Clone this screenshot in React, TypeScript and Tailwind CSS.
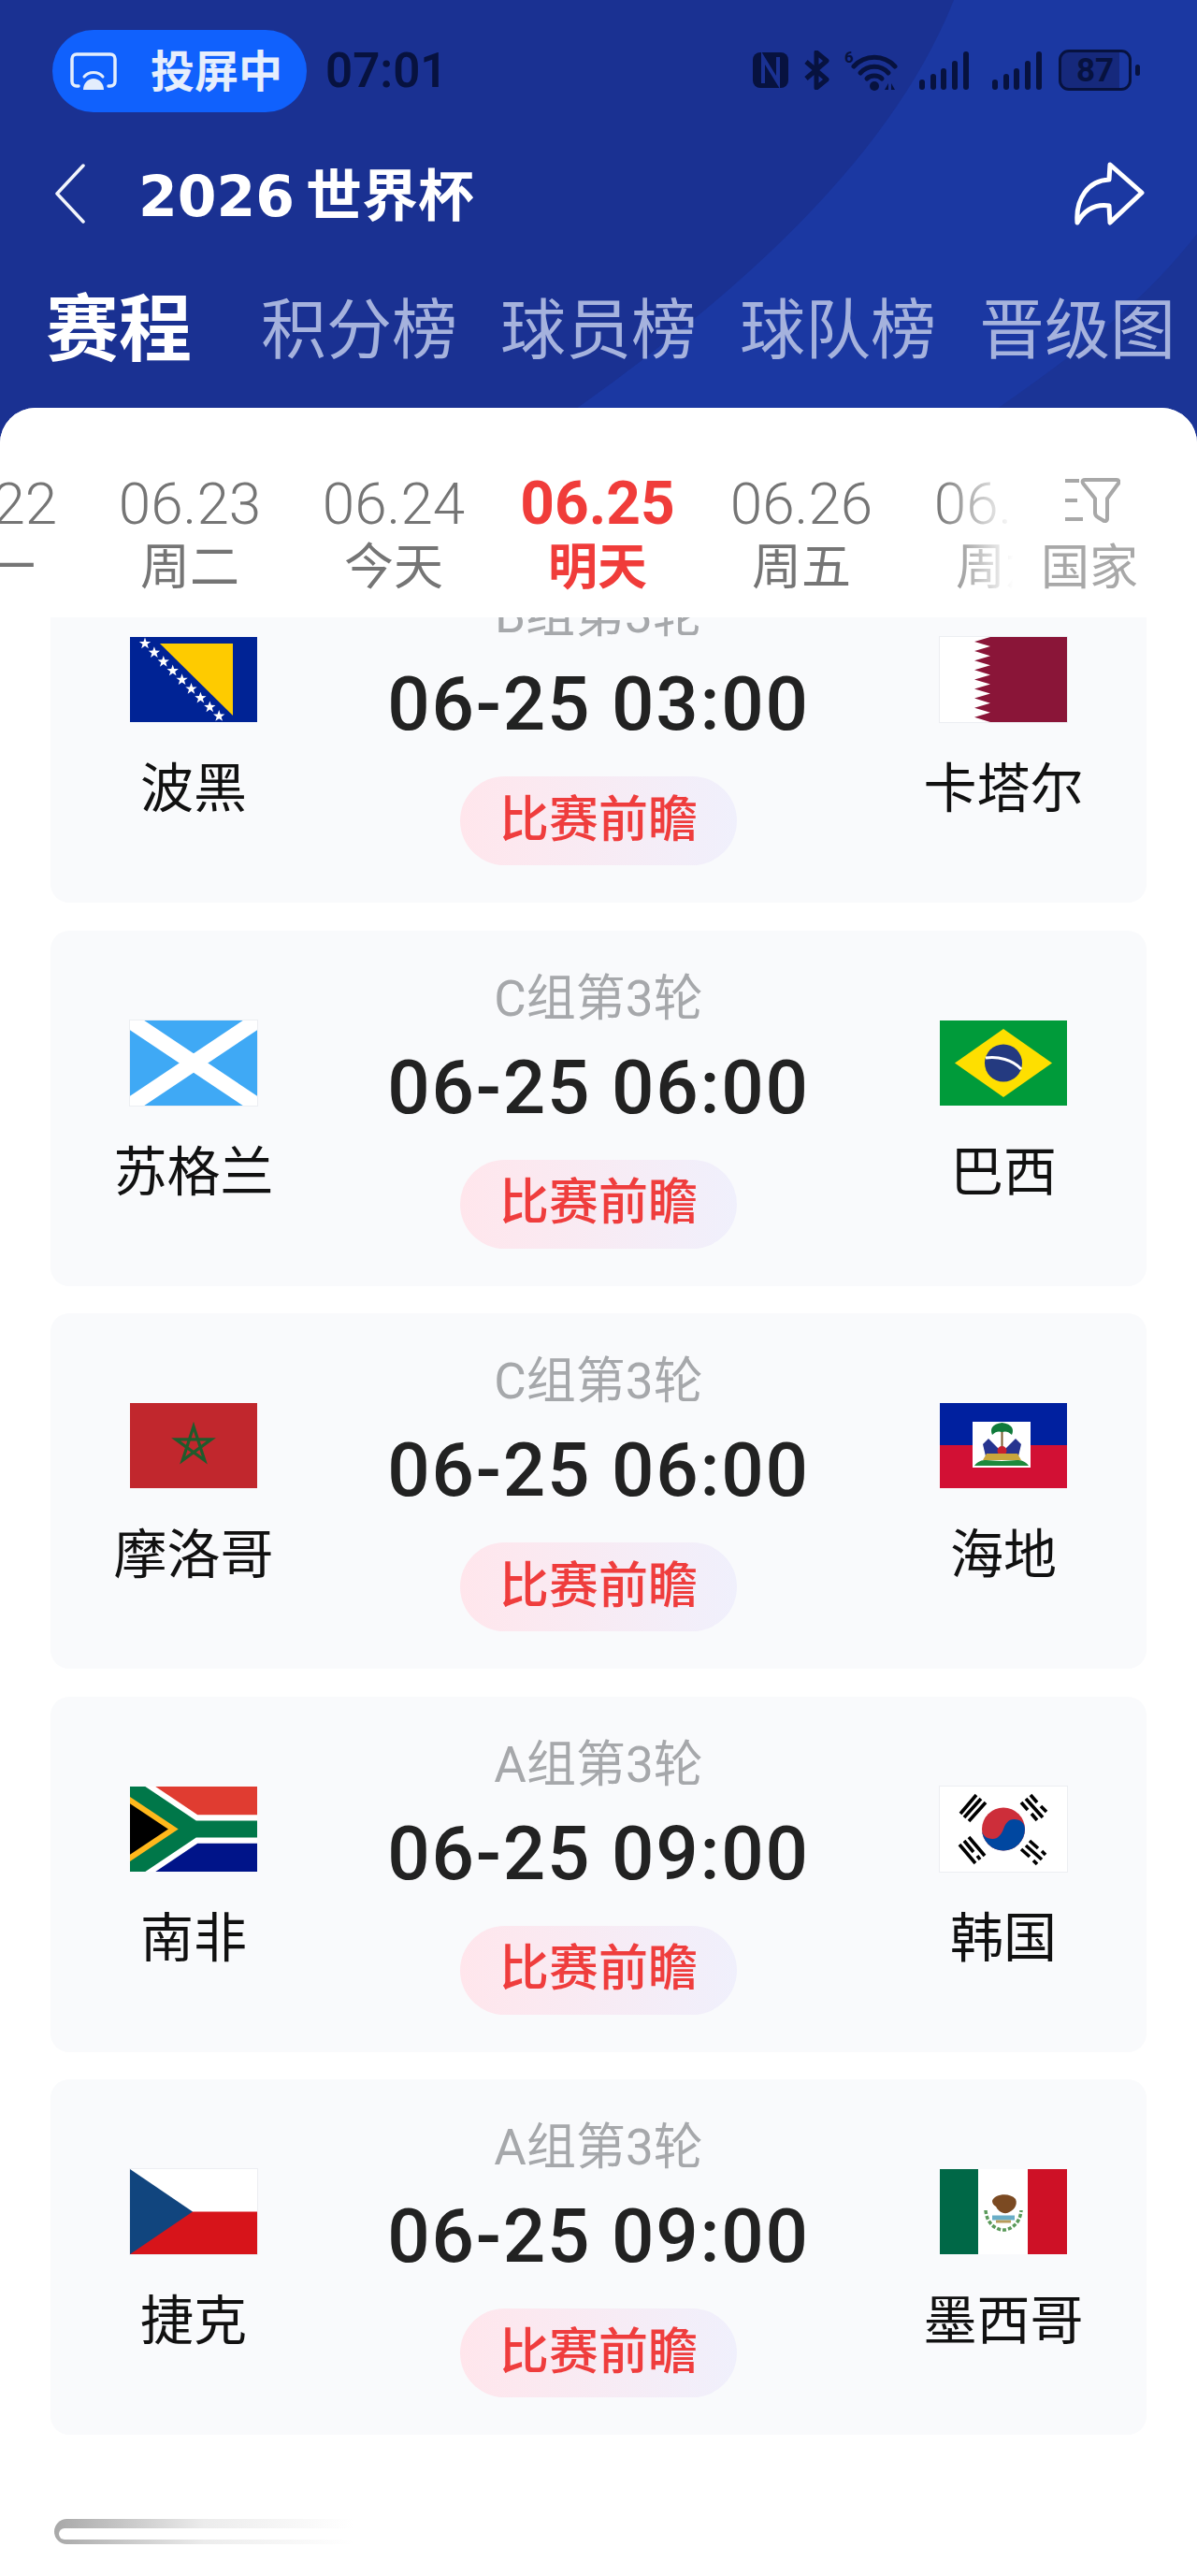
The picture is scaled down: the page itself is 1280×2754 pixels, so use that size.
import type { ReactNode } from "react";

interface Match {
  group: string;
  time: string;
  home: string;
  away: string;
  homeFlag: ReactNode;
  awayFlag: ReactNode;
}

const dates = [
  { date: "06.22", day: "周一" },
  { date: "06.23", day: "周二" },
  { date: "06.24", day: "今天" },
  { date: "06.25", day: "明天", active: true },
  { date: "06.26", day: "周五" },
  { date: "06.27", day: "周六" },
];

const tabs = ["积分榜", "球员榜", "球队榜", "晋级图"];

function starPoints(cx: number, cy: number, r: number) {
  const pts: string[] = [];
  for (let i = 0; i < 10; i++) {
    const radius = i % 2 === 0 ? r : r * 0.4;
    const a = -Math.PI / 2 + (i * Math.PI) / 5;
    pts.push(`${cx + radius * Math.cos(a)},${cy + radius * Math.sin(a)}`);
  }
  return pts.join(" ");
}

function Flag({ children, border = false }: { children: ReactNode; border?: boolean }) {
  return (
    <svg
      width="136"
      height="91"
      viewBox="0 0 136 91"
      className={border ? "block outline outline-1 outline-[#eceef2]" : "block"}
    >
      {children}
    </svg>
  );
}

function Bosnia() {
  return (
    <Flag>
      <rect width="136" height="91" fill="#002395" />
      <path d="M32 7H110V84Z" fill="#fecb00" />
      {Array.from({ length: 9 }).map((_, i) => (
        <polygon key={i} points={starPoints(16 + i * 9.9, 7 + i * 9.7, 6.5)} fill="#fff" />
      ))}
    </Flag>
  );
}

function Qatar() {
  const teeth: string[] = [];
  for (let i = 0; i < 9; i++) {
    teeth.push(`54,${i * 10.1}`, `37,${i * 10.1 + 5}`);
  }
  return (
    <Flag border>
      <rect width="136" height="91" fill="#fff" />
      <polygon points={`136,0 ${teeth.join(" ")} 54,91 136,91`} fill="#8a1538" />
    </Flag>
  );
}

function Scotland() {
  return (
    <Flag border>
      <rect width="136" height="91" fill="#3fa9f5" />
      <path d="M0 0L136 91M136 0L0 91" stroke="#fff" strokeWidth="17" />
    </Flag>
  );
}

function Brazil() {
  return (
    <Flag>
      <rect width="136" height="91" fill="#009b3a" />
      <path d="M68 9L120 45.5L68 82L16 45.5Z" fill="#fedf00" />
      <circle cx="68" cy="45.5" r="20" fill="#243a80" />
      <path d="M49 40C62 38 78 42 87 52" stroke="#fff" strokeWidth="3" fill="none" />
    </Flag>
  );
}

function Morocco() {
  return (
    <Flag>
      <rect width="136" height="91" fill="#c1272d" />
      <polygon
        points="68,25 79.8,61.2 49,38.8 87,38.8 56.2,61.2"
        fill="none"
        stroke="#1f5b2c"
        strokeWidth="3.2"
      />
    </Flag>
  );
}

function Haiti() {
  return (
    <Flag>
      <rect width="136" height="45" fill="#00209f" />
      <rect y="45" width="136" height="46" fill="#d21034" />
      <rect x="35" y="20" width="62" height="49" fill="#fff" />
      <path d="M65.5 30h2v24h-2z" fill="#7a5a2a" />
      <path d="M66.5 21C57 22 53 27 56 34C60 30 63 30 66.5 31C70 30 73 30 77 34C80 27 76 22 66.5 21Z" fill="#0f7a3a" />
      <path d="M46 44L52 38L63 49V57H49Z" fill="#26348f" />
      <path d="M87 44L81 38L70 49V57H84Z" fill="#26348f" />
      <circle cx="66.5" cy="51" r="5" fill="#c8202f" />
      <path d="M50 54H83L87 61H46Z" fill="#c9a63c" />
      <path d="M37 67C44 58 52 62 66 62C80 62 88 58 95 67Z" fill="#1c8a3c" />
    </Flag>
  );
}

function SouthAfrica() {
  return (
    <svg width="136" height="91" viewBox="0 0 90 60" preserveAspectRatio="none" className="block">
      <defs>
        <clipPath id="za-t">
          <path d="M0 0L45 30L0 60Z" />
        </clipPath>
      </defs>
      <path fill="#e03c31" d="M0 0H90V30H45Z" />
      <path fill="#001489" d="M0 60H90V30H45Z" />
      <path fill="none" stroke="#fff" strokeWidth="20" d="M90 30H45L0 0V60L45 30" />
      <path fill="#000" stroke="#ffb81c" strokeWidth="20" clipPath="url(#za-t)" d="M0 0L45 30L0 60" />
      <path fill="none" stroke="#007749" strokeWidth="12" d="M0 0L45 30H90M0 60L45 30" />
    </svg>
  );
}

function Korea() {
  return (
    <Flag border>
      <rect width="136" height="91" fill="#fff" />
      <circle cx="68" cy="45.5" r="23" fill="#cd2e3a" />
      <path d="M45 45.5A23 23 0 0 0 91 45.5C91 39 86 35 79.5 35C73 35 70 40 68 45.5C66 51 62 56 56.5 56C50 56 45 52 45 45.5Z" fill="#0047a0" />
      <g stroke="#000" strokeWidth="3.6">
        <path d="M39 9L22 29M44 13L26 33M49 17L31 37" />
        <path d="M96 59L105 67M109 70L113 74M92 64L109 79M87 68L96 76M100 80L104 84" transform="translate(0 -1)" />
        <path d="M97 9L104 17M108 21L114 27M92 13L110 33M87 17L94 25M98 29L104 36" />
        <path d="M21 62L38 82M26 58L36 70M40 74L43 78M31 54L48 74" />
      </g>
    </Flag>
  );
}

function Czech() {
  return (
    <Flag border>
      <rect width="136" height="45.5" fill="#fff" />
      <rect y="45.5" width="136" height="45.5" fill="#d7141a" />
      <path d="M0 0L67 45.5L0 91Z" fill="#11457e" />
    </Flag>
  );
}

function Mexico() {
  return (
    <Flag>
      <rect width="41" height="91" fill="#006847" />
      <rect x="41" width="53" height="91" fill="#fff" />
      <rect x="94" width="42" height="91" fill="#ce1126" />
      <path d="M56 34C58 27 74 24 81 32C84 39 78 45 72 47C66 48 62 44 60 40C58 39 56 37 56 34Z" fill="#7b4a22" />
      <path d="M49 44C50 58 60 65 68 65C76 65 86 58 87 44" stroke="#5a9a5a" strokeWidth="3.5" strokeDasharray="4 2" fill="none" />
      <path d="M56 52H80" stroke="#6aaec7" strokeWidth="5" />
      <path d="M60 56H76" stroke="#b89b5a" strokeWidth="3" />
    </Flag>
  );
}

const matches: Match[] = [
  { group: "B组第3轮", time: "06-25 03:00", home: "波黑", away: "卡塔尔", homeFlag: <Bosnia />, awayFlag: <Qatar /> },
  { group: "C组第3轮", time: "06-25 06:00", home: "苏格兰", away: "巴西", homeFlag: <Scotland />, awayFlag: <Brazil /> },
  { group: "C组第3轮", time: "06-25 06:00", home: "摩洛哥", away: "海地", homeFlag: <Morocco />, awayFlag: <Haiti /> },
  { group: "A组第3轮", time: "06-25 09:00", home: "南非", away: "韩国", homeFlag: <SouthAfrica />, awayFlag: <Korea /> },
  { group: "A组第3轮", time: "06-25 09:00", home: "捷克", away: "墨西哥", homeFlag: <Czech />, awayFlag: <Mexico /> },
];

/* ── Status bar ───────────────────────────────────────────── */

function CastIcon() {
  return (
    <svg width="50" height="42" viewBox="0 0 50 42" fill="none" className="shrink-0">
      <path
        d="M9 37H7C4 37 2 35 2 32V8C2 5 4 3 7 3H43C46 3 48 5 48 8V32C48 35 46 37 43 37H41"
        stroke="#e3edfc"
        strokeWidth="3.5"
        strokeLinecap="round"
      />
      <path d="M15 27C20 21 30 21 35 27" stroke="#e3edfc" strokeWidth="3" strokeLinecap="round" />
      <path d="M14 41C14 34 19 29 25 29C31 29 36 34 36 41Z" fill="#e3edfc" />
    </svg>
  );
}

function SignalIcon() {
  return (
    <svg width="53" height="41" viewBox="0 0 53 41" fill="#07123f">
      <rect x="0" y="30" width="6" height="11" rx="3" />
      <rect x="12" y="24" width="6" height="17" rx="3" />
      <rect x="23" y="18" width="6" height="23" rx="3" />
      <rect x="35" y="10" width="6" height="31" rx="3" />
      <rect x="47" y="0" width="6" height="41" rx="3" />
    </svg>
  );
}

function StatusIcons() {
  return (
    <div className="ml-auto mr-[61px] flex items-center">
      <svg width="38" height="38" viewBox="0 0 38 38">
        <rect width="38" height="38" rx="8" fill="#07123f" />
        <path d="M11 33V6L27 32V5" stroke="#1a3192" strokeWidth="4" fill="none" />
      </svg>
      <svg width="27" height="42" viewBox="0 0 27 42" fill="none" className="ml-[17px]">
        <path d="M2 12L24 31L13 40V2L24 11L2 30" stroke="#07123f" strokeWidth="5" strokeLinejoin="round" />
      </svg>
      <div className="relative ml-[16px] h-[44px] w-[57px]">
        <span className="absolute left-0 top-[-2px] text-[17px] font-bold leading-[20px] text-[#07123f]">6</span>
        <svg width="50" height="40" viewBox="0 0 50 40" fill="none" className="absolute bottom-0 right-0">
          <path d="M3 14C15 1 35 1 47 14" stroke="#07123f" strokeWidth="5" strokeLinecap="round" />
          <path d="M10 21C18 12 32 12 40 21" stroke="#07123f" strokeWidth="5" strokeLinecap="round" />
          <path d="M17 27C21 23 29 23 33 27" stroke="#07123f" strokeWidth="5" strokeLinecap="round" />
          <circle cx="25" cy="35" r="5" fill="#07123f" />
          <path d="M36 39L40 32V39ZM43 32L47 39H43Z" fill="#07123f" />
        </svg>
      </div>
      <div className="ml-[23px]">
        <SignalIcon />
      </div>
      <div className="ml-[25px]">
        <SignalIcon />
      </div>
      <div className="ml-[18px] flex items-center">
        <div className="flex h-[44px] w-[78px] items-center justify-center rounded-[11px] border-[3px] border-[#07123f] bg-[linear-gradient(90deg,#16297c_0%,#16297c_86%,transparent_86%)] text-[35px] font-bold leading-none text-[#07123f]">
          87
        </div>
        <div className="ml-[4px] h-[12px] w-[5px] rounded-full bg-[#07123f]" />
      </div>
    </div>
  );
}

/* ── Header ───────────────────────────────────────────────── */

function Header() {
  return (
    <header className="relative h-[476px] overflow-hidden bg-[#1a3192]">
      <svg width="1280" height="476" viewBox="0 0 1280 476" className="absolute left-0 top-0">
        <path d="M1020 0C960 150 820 300 560 476H1280V0Z" fill="#1b38a2" />
        <path d="M1280 250C1210 340 1120 400 1010 476H1280Z" fill="#1b3496" />
      </svg>
      <div className="relative">
        <div className="flex h-[120px] items-end">
          <div className="ml-[56px] flex h-[88px] w-[272px] items-center rounded-full bg-[#1061fd] pl-[19px]">
            <CastIcon />
            <span className="ml-[36px] text-[47px] font-bold leading-none text-[#e6eefc]">投屏中</span>
          </div>
          <span className="mb-[20px] ml-[20px] text-[51px] font-semibold leading-[48px] text-[#07123f]">07:01</span>
          <div className="mb-[23px] flex flex-1">
            <StatusIcons />
          </div>
        </div>
        <div className="mt-[52px] flex h-[70px] items-center">
          <svg width="34" height="64" viewBox="0 0 34 64" fill="none" className="ml-[58px]">
            <path d="M31 2L3 32L31 62" stroke="#f2f5fc" strokeWidth="3.5" strokeLinecap="round" strokeLinejoin="round" />
          </svg>
          <h1 className="ml-[56px] whitespace-nowrap font-['DejaVu_Sans','Noto_Sans_CJK_SC',sans-serif] text-[60px] font-bold leading-[70px] text-white">
            2026<span className="ml-[12px] font-['Noto_Sans_CJK_SC',sans-serif] text-[60px]">世界杯</span>
          </h1>
          <svg width="76" height="70" viewBox="0 0 76 70" fill="none" className="ml-auto mr-[56px]">
            <path
              d="M39 4L73 34L39 66L38 48C24 46 12 52 4 66C2 40 16 21 38 20Z"
              stroke="#fff"
              strokeWidth="5"
              strokeLinejoin="round"
            />
          </svg>
        </div>
        <nav className="mt-[70px] flex h-[84px] items-center pl-[49px]">
          <span className="w-[156px] text-[78px] font-bold leading-[84px] text-white">赛程</span>
          <div className="ml-[74px] flex gap-[47px]">
            {tabs.map((tab) => (
              <span key={tab} className="w-[209px] whitespace-nowrap text-[70px] leading-[84px] text-[#a5b2dd]">
                {tab}
              </span>
            ))}
          </div>
        </nav>
      </div>
    </header>
  );
}

/* ── Date strip ───────────────────────────────────────────── */

function DateStrip() {
  return (
    <div className="flex h-[224px] bg-white">
      <div className="relative flex-1 overflow-hidden">
        <div className="ml-[-124px] flex pt-[71px]">
          {dates.map((d) => (
            <div key={d.date} className="flex w-[218px] shrink-0 flex-col items-center">
              <span
                className={
                  d.active
                    ? "text-[64px] font-bold leading-[64px] text-[#f03c3a]"
                    : "text-[62px] font-light leading-[64px] text-[#757575]"
                }
              >
                {d.date}
              </span>
              <span
                className={
                  d.active
                    ? "mt-[6px] text-[53px] font-bold leading-[60px] text-[#f03c3a]"
                    : "mt-[6px] text-[53px] leading-[60px] text-[#757575]"
                }
              >
                {d.day}
              </span>
            </div>
          ))}
        </div>
        <div className="absolute bottom-0 right-0 top-0 w-[104px] bg-gradient-to-r from-transparent to-white to-80%" />
      </div>
      <div className="flex w-[176px] shrink-0 flex-col pl-[9px] pt-[75px]">
        <svg width="60" height="48" viewBox="0 0 60 48" fill="none" className="ml-[25px]">
          <path d="M1 3H16M1 24H14M1 44H20" stroke="#a8a8a8" strokeWidth="4" />
          <path
            d="M22 2H56C59 2 59 5 57 7L46 22V43C46 46 44 47 41 45L36 42C34 41 33 39 33 37V22L21 7C19 5 19 2 22 2Z"
            stroke="#a8a8a8"
            strokeWidth="4"
            strokeLinejoin="round"
          />
        </svg>
        <span className="mt-[19px] whitespace-nowrap text-[52px] leading-[60px] text-[#a8a8a8]">国家</span>
      </div>
    </div>
  );
}

/* ── Match card ───────────────────────────────────────────── */

function Team({ name, flag }: { name: string; flag: ReactNode }) {
  return (
    <div className="flex w-[270px] flex-col items-center pt-[96px]">
      {flag}
      <span className="mt-[37px] whitespace-nowrap text-[57px] leading-[70px] text-[#111]">{name}</span>
    </div>
  );
}

function MatchCard({ match }: { match: Match }) {
  return (
    <article className="flex h-[380px] justify-between rounded-[20px] bg-[#f9fafc] px-[18px]">
      <Team name={match.home} flag={match.homeFlag} />
      <div className="flex flex-col items-center pt-[43px]">
        <span className="text-[53px] leading-[60px] text-[#a6a8ab]">{match.group}</span>
        <span className="mt-[25px] whitespace-nowrap text-[80px] font-medium leading-[80px] tracking-[1.8px] text-[#222]">
          {match.time}
        </span>
        <button className="mt-[37px] flex h-[95px] w-[296px] items-center justify-center rounded-full bg-gradient-to-r from-[#ffe6ec] to-[#f0f0fc] text-[53px] font-medium text-[#ef3d3d]">
          比赛前瞻
        </button>
      </div>
      <Team name={match.away} flag={match.awayFlag} />
    </article>
  );
}

export default function App() {
  return (
    <div className="h-[2754px] overflow-hidden bg-white font-['Roboto','Noto_Sans_CJK_SC',sans-serif]">
      <Header />
      <main className="relative mt-[-40px] rounded-t-[38px] bg-white">
        <div className="overflow-hidden rounded-t-[38px]">
          <DateStrip />
        </div>
        <div className="overflow-hidden">
          <div className="mx-[54px] mt-[-75px] flex flex-col gap-[29.5px]">
            {matches.map((m) => (
              <MatchCard key={m.home} match={m} />
            ))}
          </div>
          {/* half-rendered row at the bottom edge */}
          <div className="ml-[58px] mt-[90px] w-[320px] rounded-l-[14px] bg-gradient-to-r from-[#a8a8a8] via-[#ececec] to-transparent pb-[5px] pl-[5px] pt-[10px]">
            <div className="h-[12px] rounded-l-[8px] bg-white" />
          </div>
        </div>
      </main>
    </div>
  );
}
